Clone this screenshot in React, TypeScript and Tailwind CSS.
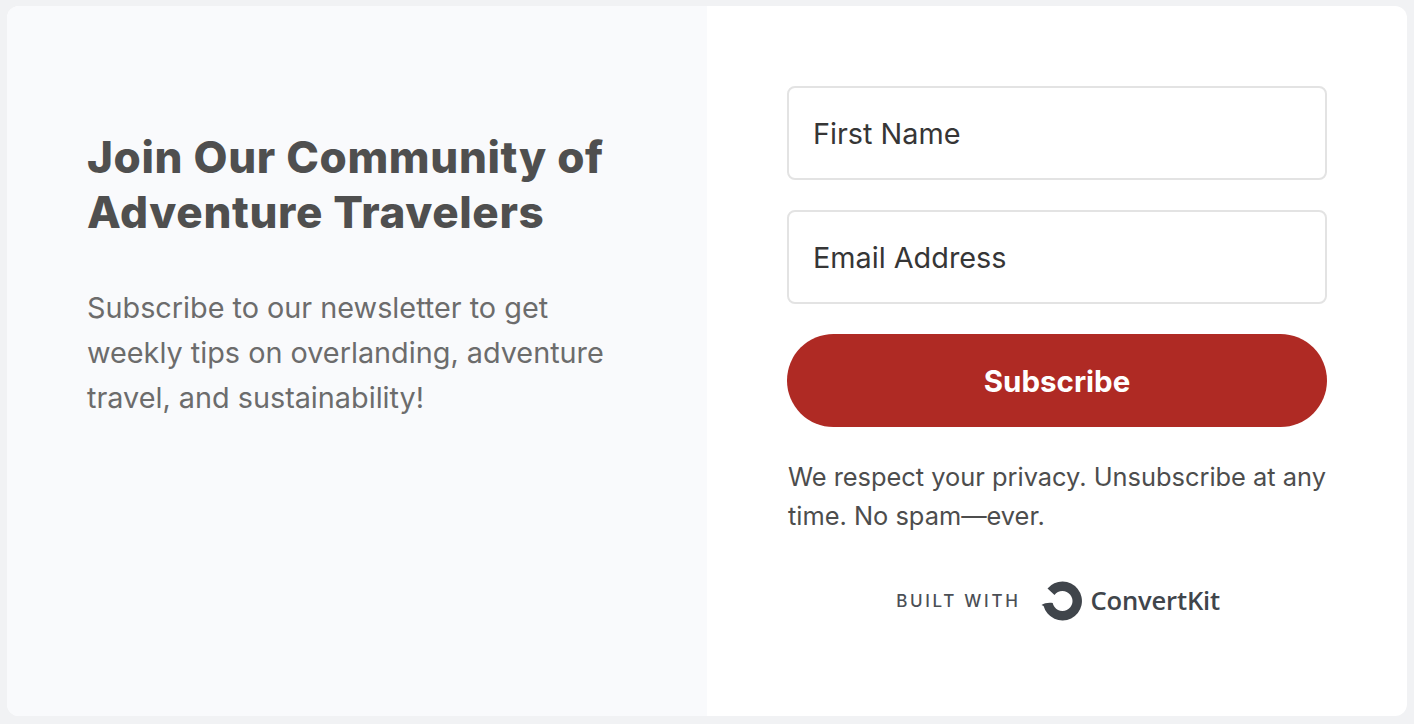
export default function App() {
  return (
    <div className="h-[724px] w-[1414px] overflow-hidden bg-[#f1f2f4] pl-[7px] pr-[7px] pt-[6px] font-['Inter',sans-serif]">
      <div className="flex h-[710px] w-[1400px] overflow-hidden rounded-[12px] bg-white">
        <div className="w-[700px] bg-[#f9fafc] pl-[80px] pr-[90px] pt-[124px]">
          <h1 className="w-[545px] text-[44px] font-extrabold leading-[55px] tracking-[0.65px] text-[#4f4f4f]">
            Join Our Community of Adventure Travelers
          </h1>
          <p className="mt-[45px] w-[530px] text-[28.8px] leading-[45px] text-[#6c6c6c]">
            Subscribe to our newsletter to get weekly tips on overlanding, adventure travel, and sustainability!
          </p>
        </div>
        <div className="w-[700px] px-[80px] pt-[80px]">
          <div className="flex h-[94px] items-center rounded-[8px] border-2 border-[#e3e3e3] bg-white pl-[24px] pt-[1px] text-[28.8px] text-[#363636]">
            First Name
          </div>
          <div className="mt-[30px] flex h-[94px] items-center rounded-[8px] border-2 border-[#e3e3e3] bg-white pl-[24px] pt-[1px] text-[28.8px] text-[#363636]">
            Email Address
          </div>
          <button className="mt-[30px] flex h-[93px] w-[540px] items-center justify-center rounded-full bg-[#af2a24] pt-[1px] text-[29.5px] font-bold text-white">
            Subscribe
          </button>
          <p className="mt-[30px] w-[542px] pl-[1px] text-[25.4px] leading-[39px] text-[#4d4d4d]">
            We respect your privacy. Unsubscribe at any time. No spam—ever.
          </p>
          <div className="mt-[46px] flex items-center justify-center pl-[2px]">
            <span className="pt-[2px] text-[17px] font-medium tracking-[2.7px] text-[#4b4f55]">BUILT WITH</span>
            <svg className="ml-[19px]" width="44" height="40" viewBox="0 0 44 40" aria-hidden="true">
              <path
                d="M1.5 24L3.6 25A19.5 19.5 0 1 0 7.5 7.5L14.5 14A10 10 0 1 1 12.7 22C8.5 21.5 4.5 22 1.5 24Z"
                fill="#40454b"
              />
            </svg>
            <span className="ml-[7px] font-['Open_Sans',sans-serif] text-[25.6px] font-semibold tracking-[-0.2px] text-[#40454b]">ConvertKit</span>
          </div>
        </div>
      </div>
    </div>
  );
}
